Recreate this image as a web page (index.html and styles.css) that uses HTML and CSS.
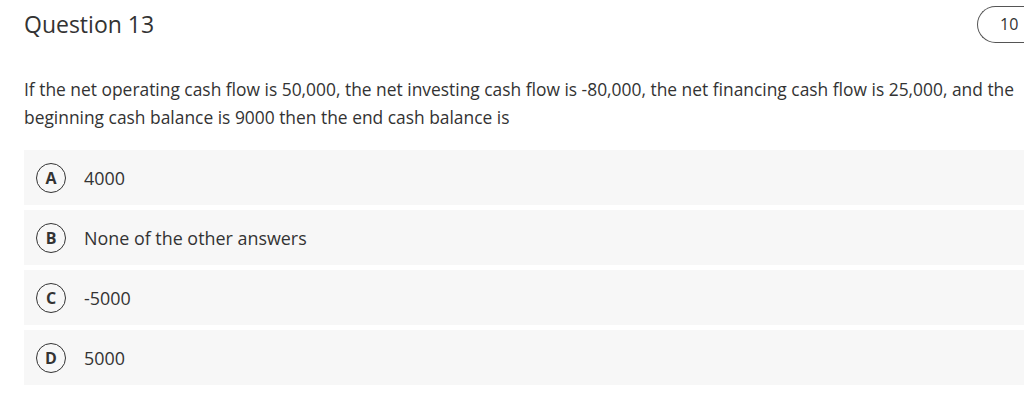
FILE: index.html
```html
<!DOCTYPE html>
<html>
<head>
<meta charset="utf-8">
<link rel="stylesheet" href="styles.css">
</head>
<body>
<div class="page">
  <header class="head">
    <h1 class="title">Question 13</h1>
    <div class="points">10</div>
  </header>
  <p class="question">If the net operating cash flow is 50,000, the net investing cash flow is -80,000, the net financing cash flow is 25,000, and the beginning cash balance is 9000 then the end cash balance is</p>
  <ul class="options">
    <li class="option"><span class="letter">A</span><span class="answer">4000</span></li>
    <li class="option"><span class="letter">B</span><span class="answer">None of the other answers</span></li>
    <li class="option"><span class="letter">C</span><span class="answer">-5000</span></li>
    <li class="option"><span class="letter">D</span><span class="answer">5000</span></li>
  </ul>
</div>
</body>
</html>
```
FILE: styles.css
```css
html, body {
  margin: 0;
  padding: 0;
  background: #fff;
  overflow: hidden;
}
body {
  font-family: "Open Sans", "Noto Sans", sans-serif;
  color: #333;
}
.page {
  padding-left: 24px;
  width: 1000px;
}
.head {
  display: flex;
  justify-content: space-between;
  align-items: flex-start;
  height: 56px;
}
.title {
  margin: 8px 0 0;
  font-size: 23px;
  font-weight: 400;
  line-height: 32px;
  color: #333;
}
.points {
  margin-top: 6px;
  width: 47px;
  height: 37px;
  box-sizing: border-box;
  border: 1px solid #555;
  border-right: none;
  border-radius: 19px 0 0 19px;
  font-size: 16px;
  line-height: 35px;
  padding-left: 22px;
  color: #333;
}
.question {
  margin: 19px 0 19px;
  font-size: 17.4px;
  line-height: 28px;
  color: #333;
}
.options {
  list-style: none;
  margin: 0;
  padding: 0;
  display: flex;
  flex-direction: column;
  gap: 5px;
}
.option {
  display: flex;
  align-items: center;
  height: 55px;
  background: #f7f7f7;
  padding-left: 12px;
}
.letter {
  width: 30px;
  height: 30px;
  box-sizing: border-box;
  border: 1.5px solid #333;
  border-radius: 50%;
  display: flex;
  align-items: center;
  justify-content: center;
  font-size: 16px;
  font-weight: 700;
  color: #333;
  margin-right: 18px;
}
.answer {
  font-size: 17.9px;
  color: #333;
}
```
